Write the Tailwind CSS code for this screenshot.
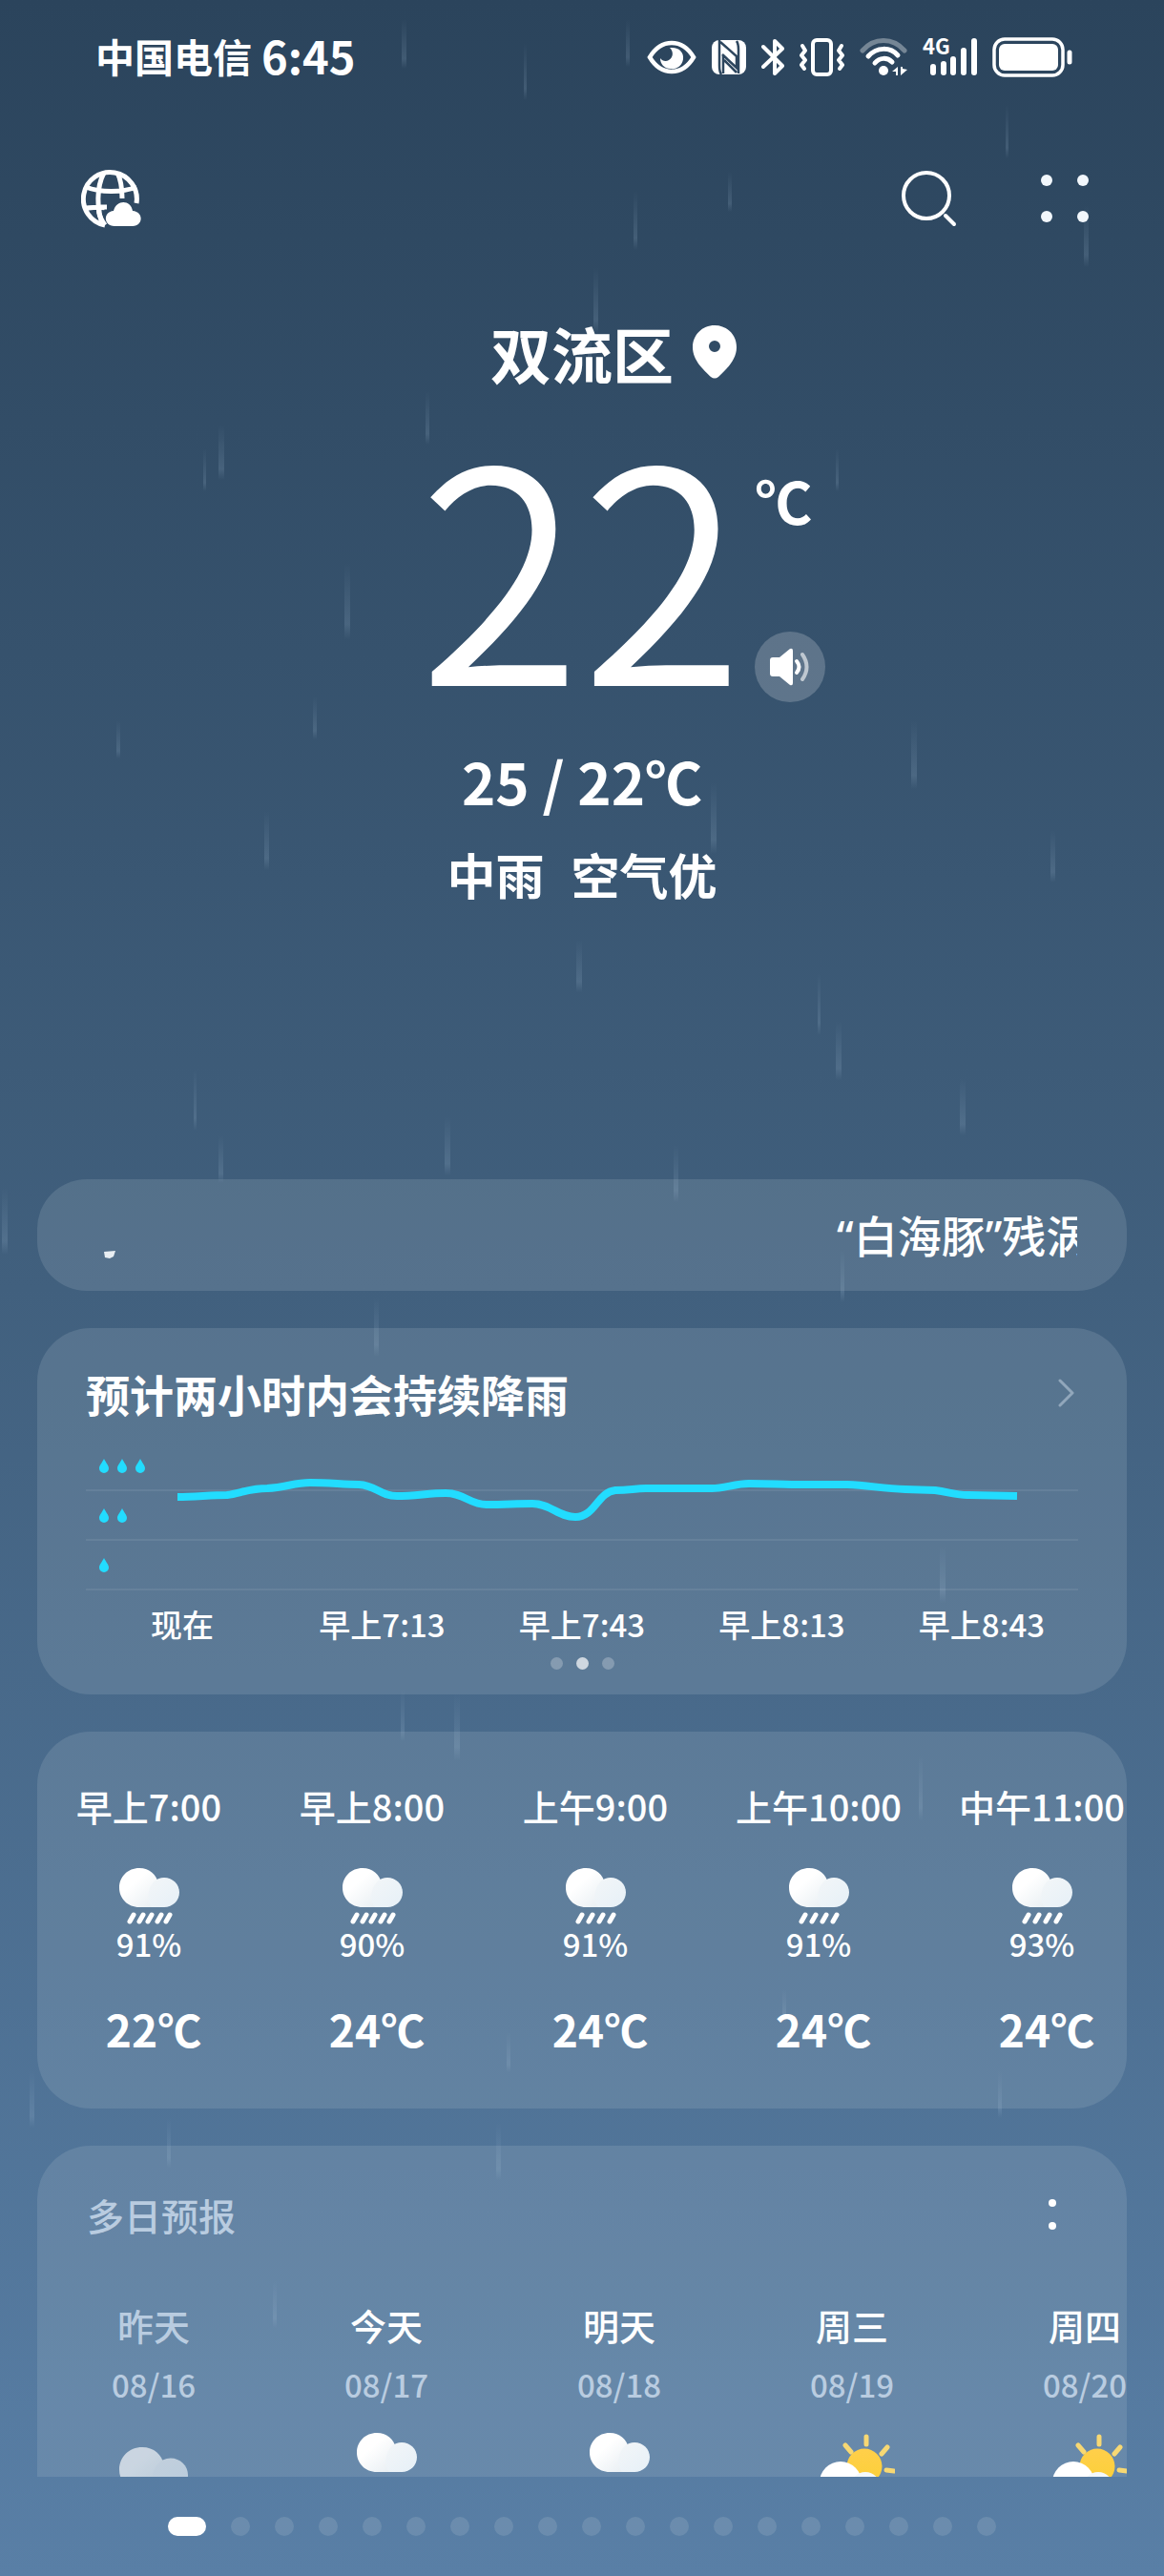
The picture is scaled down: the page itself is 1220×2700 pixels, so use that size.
<!DOCTYPE html>
<html lang="zh-CN">
<head>
    <meta charset="UTF-8">
    <meta name="viewport" content="width=device-width, initial-scale=1.0">
    <title>天气 - 双流区</title>
    <script src="https://cdn.jsdelivr.net/npm/@tailwindcss/browser@4"></script>
</head>
<body class="font-['Noto_Sans_CJK_SC',sans-serif] text-white">
    <!-- 公用图标 -->
    <svg class="absolute size-0" aria-hidden="true">
        <defs>
            <linearGradient id="cloudBig" x1="0" y1="0" x2="1" y2="1">
                <stop offset="0.35" stop-color="#ffffff" />
                <stop offset="1" stop-color="#e3ebf0" />
            </linearGradient>
            <linearGradient id="cloudSmall" x1="0" y1="0" x2="1" y2="1">
                <stop offset="0" stop-color="#f3f6f8" />
                <stop offset="1" stop-color="#e6f0f7" />
            </linearGradient>
            <linearGradient id="sunFill" x1="0" y1="0" x2="0" y2="1">
                <stop offset="0" stop-color="#ffcf4a" />
                <stop offset="1" stop-color="#fbd038" />
            </linearGradient>
            <linearGradient id="rainFill" x1="0" y1="0" x2="0" y2="1">
                <stop offset="0" stop-color="#a9c4dc" stop-opacity="0" />
                <stop offset="0.8" stop-color="#a9c4dc" stop-opacity="0.17" />
                <stop offset="1" stop-color="#a9c4dc" stop-opacity="0" />
            </linearGradient>
        </defs>
        <symbol id="cloud" viewBox="0 0 63 42">
            <path d="M21 0C32 0 39 7 41 16L48 41H21C9 41 0 32 0 20.500C0 9 9 0 21 0Z" fill="url(#cloudBig)" />
            <path d="M47 10C56 10 63 17 63 25.500C63 34 56 41 47 41H34C26 32 31 10 47 10Z" fill="url(#cloudSmall)" />
        </symbol>
        <symbol id="rain5" viewBox="0 0 63 60">
            <use href="#cloud" width="63" height="42" />
            <path d="M15 49l-4 7M25 49l-4 7M34 49l-4 7M44 49l-4 7M53 49l-4 7" stroke="#fff" stroke-width="5" stroke-linecap="round" />
        </symbol>
        <symbol id="rain4" viewBox="0 0 63 60">
            <use href="#cloud" width="63" height="42" />
            <path d="M17 49l-4 7M28 49l-4 7M39 49l-4 7M50 49l-4 7" stroke="#fff" stroke-width="5" stroke-linecap="round" />
        </symbol>
        <symbol id="partly" viewBox="0 0 90 70">
            <path d="M60 4v8M38 13l6 7M82 15l-6 7M81 39l8 1" stroke="#f7d873" stroke-width="5" stroke-linecap="round" />
            <circle cx="58" cy="35" r="18.500" fill="url(#sunFill)" />
            <circle cx="33" cy="52" r="22" fill="#fff" />
            <circle cx="59" cy="57" r="16" fill="#f3f8fb" />
        </symbol>
        <symbol id="drop" viewBox="0 0 10 15">
            <path d="M5 0C7 4 10 7 10 10a5 5 0 0 1-10 0C0 7 3 4 5 0Z" fill="#22dcff" />
        </symbol>
    </svg>

    <div class="relative flex min-h-screen flex-col overflow-hidden bg-linear-to-b from-[#2b445c] via-[#41607e] to-[#597fa6]">
        <!-- 雨丝 -->
        <svg class="absolute inset-0 h-full w-full" viewBox="0 0 1220 2700" preserveAspectRatio="none" fill="url(#rainFill)">
            <rect x="421" y="20" width="5" height="52" /><rect x="549" y="45" width="3" height="60" /><rect x="656" y="20" width="4" height="50" />
            <rect x="1054" y="110" width="3" height="56" /><rect x="763" y="180" width="4" height="42" /><rect x="664" y="200" width="4" height="62" />
            <rect x="1136" y="215" width="5" height="65" /><rect x="622" y="280" width="5" height="70" /><rect x="616" y="340" width="4" height="55" />
            <rect x="446" y="410" width="4" height="56" /><rect x="229" y="445" width="6" height="58" /><rect x="213" y="470" width="3" height="45" />
            <rect x="361" y="590" width="6" height="80" /><rect x="876" y="470" width="3" height="45" /><rect x="122" y="755" width="4" height="40" />
            <rect x="328" y="730" width="4" height="45" /><rect x="955" y="755" width="6" height="72" /><rect x="277" y="850" width="5" height="62" />
            <rect x="745" y="820" width="6" height="75" /><rect x="1101" y="870" width="5" height="55" /><rect x="604" y="985" width="6" height="55" />
            <rect x="857" y="1020" width="3" height="65" /><rect x="876" y="1070" width="6" height="62" /><rect x="203" y="1120" width="3" height="65" />
            <rect x="229" y="1190" width="5" height="50" /><rect x="466" y="1170" width="6" height="62" /><rect x="706" y="1200" width="5" height="60" />
            <rect x="1006" y="1130" width="6" height="60" /><rect x="2" y="1245" width="6" height="70" /><rect x="881" y="1310" width="4" height="55" />
            <rect x="392" y="1360" width="5" height="62" /><rect x="985" y="1620" width="6" height="60" /><rect x="420" y="1770" width="4" height="55" />
            <rect x="476" y="1775" width="6" height="70" /><rect x="963" y="1840" width="4" height="68" /><rect x="531" y="2130" width="4" height="42" />
            <rect x="31" y="2170" width="5" height="60" /><rect x="1046" y="2170" width="4" height="50" /><rect x="175" y="2220" width="4" height="52" />
            <rect x="520" y="2225" width="5" height="60" /><rect x="286" y="2390" width="4" height="50" /><rect x="820" y="2085" width="4" height="35" />
        </svg>

        <div class="relative flex grow flex-col">
            <!-- 状态栏 -->
            <div class="flex h-[120px] items-center justify-between pr-24 pl-[100px]">
                <div class="flex items-center gap-[10px] pb-1 font-bold">
                    <span class="text-[41px] leading-[56px]">中国电信</span>
                    <span class="text-[47px] leading-[56px]">6:45</span>
                </div>
                <div class="flex items-center gap-4">
                    <svg class="h-[36px] w-[52px]" viewBox="0 0 52 36" fill="none">
                        <path d="M3 18C9 8 17 3 26 3s17 5 23 15C43 28 35 33 26 33S9 28 3 18Z" stroke="#fff" stroke-width="4.500" />
                        <path d="M24 8C34 7 39 13 38 20C37 27 31 31 25 30C18 30 14 25 14 19C16 22 20 23 23 21C28 18 28 12 24 8Z" fill="#fff" />
                    </svg>
                    <svg class="h-[38px] w-[36px]" viewBox="0 0 36 38" fill="none">
                        <rect x="0" y="1" width="36" height="36" rx="8" fill="#fff" />
                        <path d="M8 1V28q0 6 2 9M9 3L26 18V30L11 16M12 16V36M28 36V11q0-6-2-9M13 22L26 35" stroke="#2d465e" stroke-width="2.500" />
                    </svg>
                    <svg class="h-[40px] w-[24px]" viewBox="0 0 24 40" fill="none" stroke="#fff" stroke-width="4" stroke-linecap="round" stroke-linejoin="round">
                        <path d="M2 9l20 20-8 8V3l8 8L2 30" />
                    </svg>
                    <svg class="h-[40px] w-[47px]" viewBox="0 0 47 40" fill="none" stroke="#fff" stroke-width="4" stroke-linecap="round" stroke-linejoin="round">
                        <rect x="14" y="2" width="19" height="36" rx="4" />
                        <path d="M3 8l3 5-4 5 4 5-4 5 3 4M44 8l-3 5 4 5-4 5 4 5-3 4" />
                    </svg>
                    <svg class="h-[40px] w-[50px]" viewBox="0 0 50 40" fill="none" stroke="#fff" stroke-width="5" stroke-linecap="round">
                        <path d="M3 13C15-1 35-1 47 13" stroke-opacity="0.35" />
                        <path d="M9 19C18 9 32 9 40 18" />
                        <path d="M16 26C21 20 29 20 34 25" />
                        <circle cx="25" cy="34" r="5" fill="#fff" stroke="none" />
                        <path d="M40 30v9h-2v-4h-4ZM43 39v-9h2v2l5 1Z" fill="#fff" stroke="none" />
                    </svg>
                    <div class="relative h-[40px] w-[57px]">
                        <svg class="h-[40px] w-[57px]" viewBox="0 0 57 40" stroke="#fff" stroke-width="6" stroke-linecap="round">
                            <path d="M11 30v6M22 27v9M32 22v14M43 13v23M54 3v33" />
                        </svg>
                        <span class="absolute -top-2 left-0 text-[22px] leading-[30px] font-bold">4G</span>
                    </div>
                    <svg class="h-[42px] w-[84px]" viewBox="0 0 84 42" fill="none">
                        <rect x="2" y="2" width="72" height="38" rx="11" stroke="#fff" stroke-width="3.500" />
                        <rect x="7" y="7" width="62" height="28" rx="6" fill="#fff" />
                        <path d="M81 16v10" stroke="#fff" stroke-width="5" stroke-linecap="round" />
                    </svg>
                </div>
            </div>

            <!-- 顶部操作 -->
            <header class="flex h-[176px] items-center justify-between pr-[79px] pl-[85px]">
                <button type="button" aria-label="天气地图">
                    <svg class="h-[64px] w-[64px]" viewBox="0 0 64 64" fill="none" stroke="#fff" stroke-width="5">
                        <path d="M25 60A28 28 0 1 1 58 37" />
                        <path d="M23 60C16 44 16 20 24 5M38 5c4 8 5 15 5 27M5 20C20 26 43 26 58 20M5 42c8 0 14-2 20 0" />
                        <path d="M25 60C18 50 17 43 21 41H27" />
                        <path d="M35 61C23 61 23 46 34 45C37 33 52 33 54 45C66 46 65 61 54 61Z" fill="#fff" stroke="none" />
                    </svg>
                </button>
                <div class="flex items-center gap-[88px]">
                    <button type="button" aria-label="搜索">
                        <svg class="h-[60px] w-[60px]" viewBox="0 0 60 60" fill="none" stroke="#fff" stroke-width="4" stroke-linecap="round">
                            <circle cx="28" cy="27" r="24" />
                            <path d="M48 48l9 9" />
                        </svg>
                    </button>
                    <button type="button" aria-label="更多">
                        <svg class="h-[50px] w-[50px]" viewBox="0 0 50 50" fill="#f2f7fc">
                            <circle cx="6" cy="6" r="6" /><circle cx="44" cy="6" r="6" /><circle cx="6" cy="44" r="6" /><circle cx="44" cy="44" r="6" />
                        </svg>
                    </button>
                </div>
            </header>

            <!-- 当前天气 -->
            <section class="flex h-[940px] flex-col items-center pt-7">
                <div class="flex items-center gap-5 pl-[66px]">
                    <h1 class="text-[64px] leading-[90px] font-bold">双流区</h1>
                    <svg class="h-[56px] w-[46px]" viewBox="0 0 46 56" fill="#fff" fill-rule="evenodd">
                        <path d="M23 0C36 0 46 10 46 23C46 37 34 47 27 54Q23 57 19 54C12 47 0 37 0 23C0 10 10 0 23 0ZM23 16a6 6 0 1 0 0 12a6 6 0 0 0 0-12Z" />
                    </svg>
                </div>
                <div class="mt-[14px] flex h-[308px] gap-3 pl-[84px]">
                    <div class="text-[310px] leading-[312px] font-[350]">22</div>
                    <div class="flex flex-col justify-between pt-[56px]">
                        <span class="text-[60px] leading-[80px] font-bold">℃</span>
                        <button type="button" aria-label="语音播报" class="flex size-[74px] items-center justify-center self-end rounded-full bg-white/20">
                            <svg class="h-[40px] w-[44px]" viewBox="0 0 44 40" fill="none" stroke-width="4" stroke-linecap="round">
                                <path d="M4 10h7L22 1q3-1 3 2v34q0 3-3 2L11 30H4q-3 0-3-3V13q0-3 3-3Z" fill="#fff" />
                                <path d="M29 14q5 6 0 12" stroke="#fff" />
                                <path d="M35 7q9 13 0 26" stroke="#fff" stroke-opacity="0.6" />
                            </svg>
                        </button>
                    </div>
                </div>
                <p class="mt-[42px] text-[60px] leading-[80px] font-bold">25 / 22℃</p>
                <p class="mt-[18px] flex gap-7 text-[51px] leading-[80px] font-bold"><span>中雨</span><span>空气优</span></p>
            </section>

            <main class="flex flex-col gap-[39px] px-[39px]">
                <!-- 预警滚动条 -->
                <a href="#" class="flex h-[117px] items-center justify-between rounded-[52px] bg-[#b8c8d2]/18 pr-[52px] pl-[70px]">
                    <svg class="mt-10 h-[8px] w-[12px]" viewBox="0 0 12 8"><path d="M0 1l12-1-2 6-4 2-5-1Z" fill="#e9eef2" /></svg>
                    <span class="w-[252px] overflow-hidden font-['Noto_Sans','Noto_Sans_CJK_SC',sans-serif] text-[46px] leading-[60px] font-medium whitespace-nowrap">“白海豚”残涡</span>
                </a>

                <!-- 两小时降雨 -->
                <section class="rounded-[56px] bg-[#b8c8d2]/18 px-[51px] pt-9 pb-[26px]">
                    <div class="flex h-[64px] items-center justify-between">
                        <h2 class="text-[46px] leading-[64px] font-bold">预计两小时内会持续降雨</h2>
                        <svg class="mr-1 h-[30px] w-[17px]" viewBox="0 0 17 30" fill="none" stroke="#91a7bb" stroke-width="3" stroke-linecap="round" stroke-linejoin="round"><path d="M2 2l13 13L2 28" /></svg>
                    </div>
                    <div class="relative mt-[19px]">
                        <div class="flex h-[52px] items-center gap-[9px] border-b-2 border-white/7 pl-[14px]">
                            <svg class="h-[15px] w-[10px]"><use href="#drop" /></svg>
                            <svg class="h-[15px] w-[10px]"><use href="#drop" /></svg>
                            <svg class="h-[15px] w-[10px]"><use href="#drop" /></svg>
                        </div>
                        <div class="flex h-[52px] items-center gap-[9px] border-b-2 border-white/7 pl-[14px]">
                            <svg class="h-[15px] w-[10px]"><use href="#drop" /></svg>
                            <svg class="h-[15px] w-[10px]"><use href="#drop" /></svg>
                        </div>
                        <div class="flex h-[52px] items-center gap-[9px] border-b-2 border-white/7 pl-[14px]">
                            <svg class="h-[15px] w-[10px]"><use href="#drop" /></svg>
                        </div>
                        <svg class="absolute inset-0 h-full w-full" viewBox="0 0 1040 156" preserveAspectRatio="none" fill="none" stroke="#22dcff" stroke-width="8">
                            <path d="M96 58C115 58 130 56 148 56C162 54 172 49 190 49C210 48 218 43 235 43C255 43 270 45 286 45C305 46 308 57 326 57C345 57 360 54 377 54C397 54 402 66 420 66C440 66 450 65 468 65C487 65 495 79 513 79C534 79 536 53 555 51C570 51 575 49 587 49H656C670 49 680 44 695 44C720 44 725 45 740 45H798C820 46 835 49 859 50L890 51C905 53 912 56 924 56L976 57" />
                        </svg>
                    </div>
                    <ul class="mt-[13px] flex justify-between px-[11px] text-[33px] leading-[44px] font-medium">
                        <li class="flex w-[180px] shrink-0 justify-center">现在</li>
                        <li class="flex w-[180px] shrink-0 justify-center">早上7:13</li>
                        <li class="flex w-[180px] shrink-0 justify-center">早上7:43</li>
                        <li class="flex w-[180px] shrink-0 justify-center">早上8:13</li>
                        <li class="flex w-[180px] shrink-0 justify-center">早上8:43</li>
                    </ul>
                    <div class="mt-[13px] flex justify-center gap-[14px]">
                        <span class="size-[13px] rounded-full bg-white/25"></span>
                        <span class="size-[13px] rounded-full bg-white/70"></span>
                        <span class="size-[13px] rounded-full bg-white/25"></span>
                    </div>
                </section>

                <!-- 逐小时预报 -->
                <section class="overflow-hidden rounded-[56px] bg-[#b8c8d2]/18 pt-[50px] pb-[54px]">
                    <ul class="flex text-center whitespace-nowrap">
                        <li class="flex w-[234px] shrink-0 flex-col items-center">
                            <span class="text-[38px] leading-[56px] font-medium">早上7:00</span>
                            <svg class="mt-[37px] h-[60px] w-[63px]"><use href="#rain5" /></svg>
                            <span class="text-[33px] leading-[38px] font-medium">91%</span>
                            <span class="mt-10 pl-[10px] text-[46px] leading-[60px] font-bold">22℃</span>
                        </li>
                        <li class="flex w-[234px] shrink-0 flex-col items-center">
                            <span class="text-[38px] leading-[56px] font-medium">早上8:00</span>
                            <svg class="mt-[37px] h-[60px] w-[63px]"><use href="#rain5" /></svg>
                            <span class="text-[33px] leading-[38px] font-medium">90%</span>
                            <span class="mt-10 pl-[10px] text-[46px] leading-[60px] font-bold">24℃</span>
                        </li>
                        <li class="flex w-[234px] shrink-0 flex-col items-center">
                            <span class="text-[38px] leading-[56px] font-medium">上午9:00</span>
                            <svg class="mt-[37px] h-[60px] w-[63px]"><use href="#rain4" /></svg>
                            <span class="text-[33px] leading-[38px] font-medium">91%</span>
                            <span class="mt-10 pl-[10px] text-[46px] leading-[60px] font-bold">24℃</span>
                        </li>
                        <li class="flex w-[234px] shrink-0 flex-col items-center">
                            <span class="text-[38px] leading-[56px] font-medium">上午10:00</span>
                            <svg class="mt-[37px] h-[60px] w-[63px]"><use href="#rain4" /></svg>
                            <span class="text-[33px] leading-[38px] font-medium">91%</span>
                            <span class="mt-10 pl-[10px] text-[46px] leading-[60px] font-bold">24℃</span>
                        </li>
                        <li class="flex w-[234px] shrink-0 flex-col items-center">
                            <span class="text-[38px] leading-[56px] font-medium">中午11:00</span>
                            <svg class="mt-[37px] h-[60px] w-[63px]"><use href="#rain4" /></svg>
                            <span class="text-[33px] leading-[38px] font-medium">93%</span>
                            <span class="mt-10 pl-[10px] text-[46px] leading-[60px] font-bold">24℃</span>
                        </li>
                    </ul>
                </section>

                <!-- 多日预报 -->
                <section class="h-[347px] overflow-hidden rounded-t-[56px] bg-[#b8c8d2]/18 pt-11">
                    <div class="flex h-[56px] items-center justify-between pr-[74px] pl-[52px]">
                        <h2 class="text-[39px] leading-[56px] font-medium text-[#b9cce0]">多日预报</h2>
                        <button type="button" aria-label="切换视图" class="flex flex-col gap-4">
                            <span class="size-2 rounded-full bg-white"></span>
                            <span class="size-2 rounded-full bg-white"></span>
                        </button>
                    </div>
                    <ul class="mt-[60px] flex">
                        <li class="flex w-[244px] shrink-0 flex-col items-center">
                            <span class="text-[38px] leading-[56px] font-medium text-[#b9cce0]">昨天</span>
                            <span class="mt-[14px] text-[33px] leading-[40px] font-medium text-[#b9cce0]">08/16</span>
                            <svg class="mt-[46px] h-[48px] w-[72px] opacity-65"><use href="#cloud" /></svg>
                        </li>
                        <li class="flex w-[244px] shrink-0 flex-col items-center">
                            <span class="text-[38px] leading-[56px] font-medium">今天</span>
                            <span class="mt-[14px] text-[33px] leading-[40px] font-medium text-[#b9cce0]">08/17</span>
                            <svg class="mt-[31px] h-[42px] w-[63px]"><use href="#cloud" /></svg>
                        </li>
                        <li class="flex w-[244px] shrink-0 flex-col items-center">
                            <span class="text-[38px] leading-[56px] font-medium">明天</span>
                            <span class="mt-[14px] text-[33px] leading-[40px] font-medium text-[#b9cce0]">08/18</span>
                            <svg class="mt-[31px] h-[42px] w-[63px]"><use href="#cloud" /></svg>
                        </li>
                        <li class="flex w-[244px] shrink-0 flex-col items-center">
                            <span class="text-[38px] leading-[56px] font-medium">周三</span>
                            <span class="mt-[14px] text-[33px] leading-[40px] font-medium text-[#b9cce0]">08/19</span>
                            <svg class="mt-[31px] h-[70px] w-[90px]"><use href="#partly" /></svg>
                        </li>
                        <li class="flex w-[244px] shrink-0 flex-col items-center">
                            <span class="text-[38px] leading-[56px] font-medium">周四</span>
                            <span class="mt-[14px] text-[33px] leading-[40px] font-medium text-[#b9cce0]">08/20</span>
                            <svg class="mt-[31px] h-[70px] w-[90px]"><use href="#partly" /></svg>
                        </li>
                    </ul>
                </section>
            </main>

            <!-- 城市分页 -->
            <nav class="flex grow items-center justify-center gap-[26px]">
                <span class="h-5 w-10 rounded-full bg-white"></span>
                <span class="size-5 rounded-full bg-[#b8c8d2]/20"></span>
                <span class="size-5 rounded-full bg-[#b8c8d2]/20"></span>
                <span class="size-5 rounded-full bg-[#b8c8d2]/20"></span>
                <span class="size-5 rounded-full bg-[#b8c8d2]/20"></span>
                <span class="size-5 rounded-full bg-[#b8c8d2]/20"></span>
                <span class="size-5 rounded-full bg-[#b8c8d2]/20"></span>
                <span class="size-5 rounded-full bg-[#b8c8d2]/20"></span>
                <span class="size-5 rounded-full bg-[#b8c8d2]/20"></span>
                <span class="size-5 rounded-full bg-[#b8c8d2]/20"></span>
                <span class="size-5 rounded-full bg-[#b8c8d2]/20"></span>
                <span class="size-5 rounded-full bg-[#b8c8d2]/20"></span>
                <span class="size-5 rounded-full bg-[#b8c8d2]/20"></span>
                <span class="size-5 rounded-full bg-[#b8c8d2]/20"></span>
                <span class="size-5 rounded-full bg-[#b8c8d2]/20"></span>
                <span class="size-5 rounded-full bg-[#b8c8d2]/20"></span>
                <span class="size-5 rounded-full bg-[#b8c8d2]/20"></span>
                <span class="size-5 rounded-full bg-[#b8c8d2]/20"></span>
                <span class="size-5 rounded-full bg-[#b8c8d2]/20"></span>
            </nav>
        </div>
    </div>
</body>
</html>
